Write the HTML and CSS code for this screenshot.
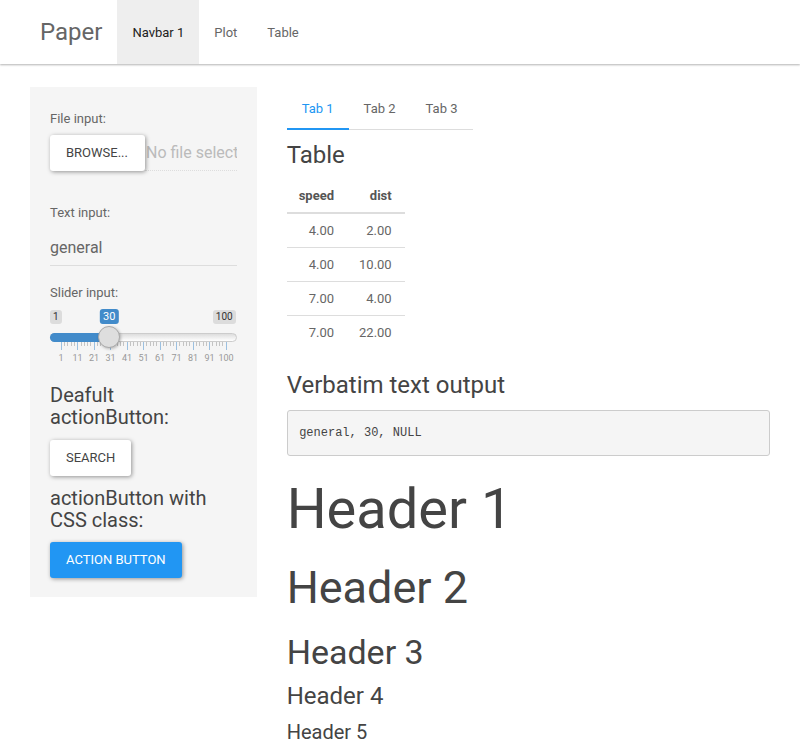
FILE: index.html
```html
<!DOCTYPE html>
<html lang="en">
<head>
<meta charset="utf-8">
<title>Paper</title>
<link rel="stylesheet" href="styles.css">
</head>
<body>
<nav class="navbar">
  <span class="brand">Paper</span>
  <ul class="nav">
    <li class="active"><a>Navbar 1</a></li>
    <li><a>Plot</a></li>
    <li><a>Table</a></li>
  </ul>
</nav>

<div class="layout">
  <form class="well">
    <div class="group group-file">
      <label class="lbl">File input:</label>
      <div class="file-input">
        <span class="btn btn-default">Browse...</span>
        <input class="file-name" type="text" readonly placeholder="No file selected">
      </div>
    </div>

    <div class="group group-text">
      <label class="lbl">Text input:</label>
      <div class="text-input">general</div>
    </div>

    <div class="group group-slider">
      <label class="lbl">Slider input:</label>
      <div class="irs">
        <span class="irs-min">1</span>
        <span class="irs-max">100</span>
        <span class="irs-line"></span>
        <span class="irs-bar" style="width:59.3px"></span>
        <span class="irs-single" style="left:59.3px">30</span>
        <span class="irs-handle" style="left:48.3px"></span>
        <svg class="irs-grid" width="187" height="10" viewBox="0 0 187 10">
          <path class="minor" d="M14.5 0v4M17.5 0v4M21.5 0v4M24.5 0v4M31.5 0v4M34.5 0v4M37.5 0v4M40.5 0v4M47.5 0v4M50.5 0v4M54.5 0v4M57.5 0v4M63.5 0v4M67.5 0v4M70.5 0v4M73.5 0v4M80.5 0v4M83.5 0v4M87.5 0v4M90.5 0v4M96.5 0v4M100.5 0v4M103.5 0v4M106.5 0v4M113.5 0v4M116.5 0v4M120.5 0v4M123.5 0v4M129.5 0v4M133.5 0v4M136.5 0v4M139.5 0v4M146.5 0v4M149.5 0v4M153.5 0v4M156.5 0v4M162.5 0v4M166.5 0v4M169.5 0v4M172.5 0v4"/>
          <path class="major" d="M11.5 0v8M27.5 0v8M44.5 0v8M60.5 0v8M77.5 0v8M93.5 0v8M110.5 0v8M126.5 0v8M143.5 0v8M159.5 0v8M176.5 0v8"/>
        </svg>
        <span class="grid-text" style="left:11px">1</span>
        <span class="grid-text" style="left:27.5px">11</span>
        <span class="grid-text" style="left:44px">21</span>
        <span class="grid-text" style="left:60.5px">31</span>
        <span class="grid-text" style="left:77px">41</span>
        <span class="grid-text" style="left:93.5px">51</span>
        <span class="grid-text" style="left:110px">61</span>
        <span class="grid-text" style="left:126.5px">71</span>
        <span class="grid-text" style="left:143px">81</span>
        <span class="grid-text" style="left:159.5px">91</span>
        <span class="grid-text" style="left:176px">100</span>
      </div>
    </div>

    <h5 class="side-heading">Deafult actionButton:</h5>
    <span class="btn btn-default">Search</span>
    <h5 class="side-heading">actionButton with CSS class:</h5>
    <span class="btn btn-primary">Action button</span>
  </form>

  <main class="main">
    <ul class="tabs">
      <li class="active"><a>Tab 1</a></li>
      <li><a>Tab 2</a></li>
      <li><a>Tab 3</a></li>
    </ul>

    <h4>Table</h4>
    <table class="data">
      <thead>
        <tr><th>speed</th><th>dist</th></tr>
      </thead>
      <tbody>
        <tr><td>4.00</td><td>2.00</td></tr>
        <tr><td>4.00</td><td>10.00</td></tr>
        <tr><td>7.00</td><td>4.00</td></tr>
        <tr><td>7.00</td><td>22.00</td></tr>
      </tbody>
    </table>

    <h4>Verbatim text output</h4>
    <pre class="verbatim">general, 30, NULL</pre>

    <h1>Header 1</h1>
    <h2>Header 2</h2>
    <h3>Header 3</h3>
    <h4>Header 4</h4>
    <h5>Header 5</h5>
  </main>
</div>
</body>
</html>
```

FILE: styles.css
```css
* { box-sizing: border-box; }

body {
  margin: 0;
  font-family: Roboto, "Noto Sans", "Liberation Sans", sans-serif;
  font-size: 13px;
  line-height: 24px;
  color: #666;
  background: #fff;
}

ul { list-style: none; margin: 0; padding: 0; }

/* Navbar */
.navbar {
  display: flex;
  align-items: stretch;
  height: 64px;
  padding: 0 25px;
  background: #fff;
  box-shadow: 0 1px 2px rgba(0, 0, 0, 0.3);
  margin-bottom: 23px;
}
.brand {
  padding: 0 15px;
  font-size: 24px;
  line-height: 64px;
  color: #666;
}
.nav { display: flex; }
.nav a {
  display: block;
  padding: 1px 15px 0;
  line-height: 63px;
  color: #666;
}
.nav .active a {
  background: #eee;
  color: #212121;
}

/* Layout */
.layout {
  display: grid;
  grid-template-columns: 226.67px 1fr;
  column-gap: 30px;
  align-items: start;
  padding: 0 30px;
}

/* Sidebar well */
.well {
  margin: 0;
  padding: 19px 20px;
  background: #f5f5f5;
}
.group { margin-bottom: 15px; }
.lbl {
  display: block;
  margin-bottom: 5px;
  padding-top: 1px;
  line-height: 23px;
  font-weight: 400;
  color: #666;
}
.group-file { margin-bottom: 29px; }
.group-text { margin-bottom: 14px; }

.btn {
  display: inline-block;
  padding: 6px 16px;
  font-size: 13px;
  line-height: 24px;
  text-transform: uppercase;
  border-radius: 3px;
  box-shadow: 1px 1px 4px rgba(0, 0, 0, 0.4);
  white-space: nowrap;
}
.btn-default { background: #fff; color: #444; }
.btn-primary { background: #2196f3; color: #fff; }

.file-input { display: flex; }
.file-input .btn { flex: none; position: relative; z-index: 1; padding-right: 17px; }
.file-name {
  flex: 1;
  min-width: 0;
  width: 100%;
  height: 36px;
  margin: 0;
  padding: 0 0 0 1px;
  font-family: inherit;
  font-size: 16px;
  color: #666;
  background: transparent;
  border: none;
  border-bottom: 1px dotted #ddd;
  outline: none;
}
.file-name::placeholder { color: #bbb; opacity: 1; }

.text-input {
  height: 37px;
  padding: 7px 0 5px;
  font-size: 16px;
  line-height: 24px;
  color: #666;
  box-shadow: inset 0 -1px 0 #ddd;
}

/* Slider (ion.rangeSlider, shiny skin) */
.group-slider { margin-bottom: 15px; }
.irs {
  position: relative;
  height: 60px;
}
.irs-min, .irs-max {
  position: absolute;
  top: 1px;
  padding: 0 3px;
  font-size: 10px;
  line-height: 14px;
  color: #333;
  background: rgba(0, 0, 0, 0.1);
  border-radius: 3px;
}
.irs-min { left: 0; }
.irs-max { right: 1px; }
.irs-single {
  position: absolute;
  top: 0;
  transform: translateX(-50%);
  padding: 0 3px;
  font-size: 11px;
  line-height: 15px;
  color: #fff;
  background: #428bca;
  border-radius: 3px;
}
.irs-line {
  position: absolute;
  left: 0;
  right: 0;
  top: 24px;
  height: 9px;
  border: 1px solid #ccc;
  border-radius: 16px;
  background: linear-gradient(#ddd, #fff);
}
.irs-bar {
  position: absolute;
  left: 0;
  top: 24px;
  height: 9px;
  background: #428bca;
  border-radius: 16px 0 0 16px;
}
.irs-handle {
  position: absolute;
  top: 17px;
  width: 22px;
  height: 22px;
  border: 1px solid #aaa;
  border-radius: 50%;
  background: #dedede;
  box-shadow: 1px 1px 3px rgba(0, 0, 0, 0.25);
  z-index: 2;
}
.irs-grid {
  position: absolute;
  left: 0;
  top: 33px;
  display: block;
}
.irs-grid .minor { stroke: #c4c4c4; stroke-width: 1; }
.irs-grid .major { stroke: #9cc0e0; stroke-width: 1; }
.grid-text {
  position: absolute;
  top: 44px;
  transform: translateX(-50%);
  font-size: 9px;
  line-height: 11px;
  color: #999;
  white-space: nowrap;
}

/* Headings */
h1, h2, h3, h4, h5 {
  font-family: Roboto, "Noto Sans", "Liberation Sans", sans-serif;
  font-weight: 400;
  line-height: 1.1;
  color: #444;
}
h1 { font-size: 56px; margin: 23px 0 11.5px; }
h2 { font-size: 45px; margin: 22px 0 11.5px; }
h3 { font-size: 34px; margin: 22px 0 11.5px; }
h4 { font-size: 24px; margin: 11.5px 0; }
h5 { font-size: 20px; margin: 11.5px 0; }

.side-heading {
  max-width: 180px;
  margin: 15px 0 11.5px;
}
.btn + .side-heading { margin-top: 11px; }

/* Main */
.main { min-width: 0; }
.tabs {
  display: flex;
  width: max-content;
  border-bottom: 1px solid #ddd;
}
.tabs li { margin-bottom: -1px; }
.tabs a {
  display: block;
  padding: 10px 15px 9px;
  line-height: 24px;
  color: #666;
}
.tabs .active a {
  color: #2196f3;
  box-shadow: inset 0 -2px 0 #2196f3;
}

.data {
  border-collapse: collapse;
  margin-bottom: 23px;
}
.data th, .data td {
  padding: 5px 13px 5px 12px;
  line-height: 23px;
  text-align: right;
  color: #666;
}
.data th {
  font-weight: 700;
  color: #555;
  border-bottom: 2px solid #ddd;
}
.data td { border-top: 1px solid #ddd; }

.verbatim {
  margin: 0 0 11.5px;
  padding: 11.5px;
  font-family: "Liberation Mono", "DejaVu Sans Mono", monospace;
  font-size: 12px;
  line-height: 21px;
  color: #444;
  background: #f5f5f5;
  border: 1px solid #ccc;
  border-radius: 3px;
}
```
